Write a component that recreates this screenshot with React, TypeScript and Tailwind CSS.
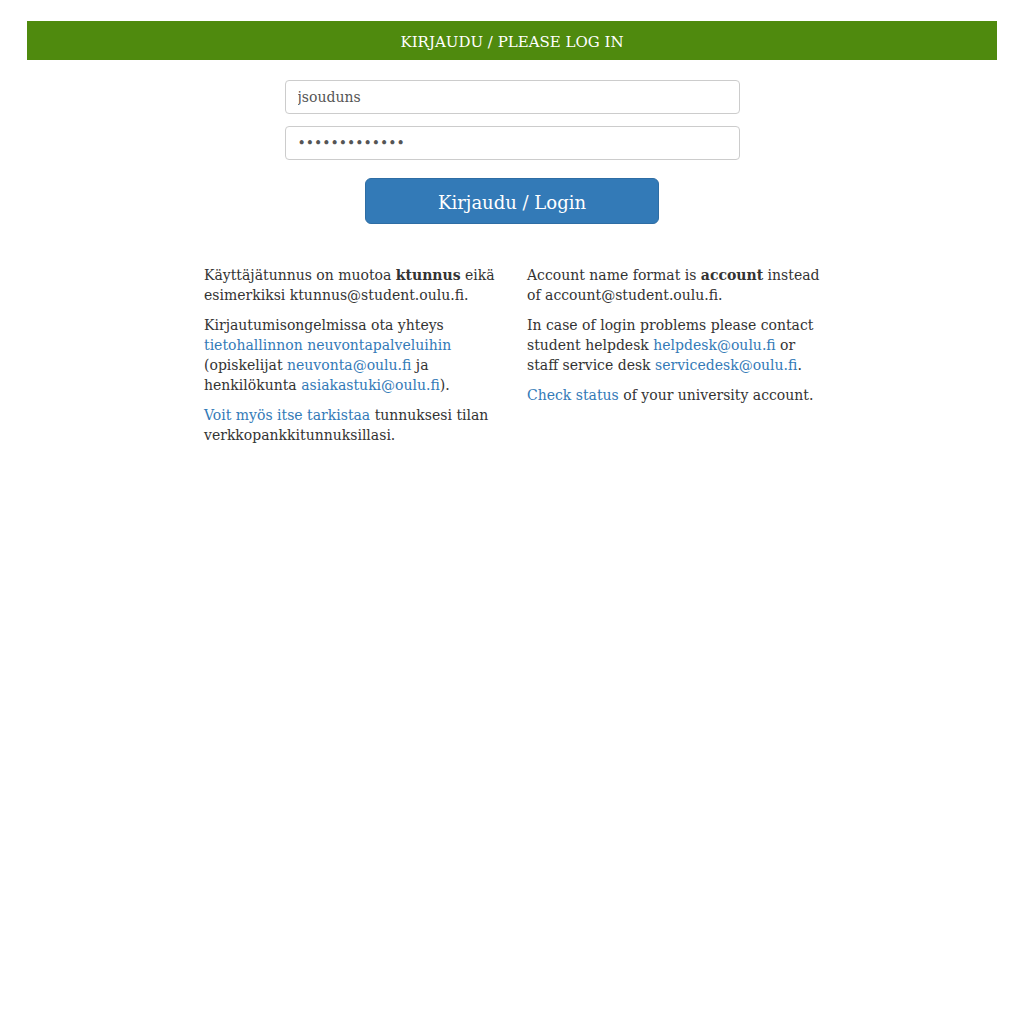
import React from "react";

export default function App() {
  const link = "text-[#337ab7]";
  return (
    <div className="min-h-screen bg-white text-[#333] text-[14px] leading-[20px]" style={{ fontFamily: '"DejaVu Serif", serif' }}>
      <div className="px-[27px] pt-[21px]">
        <div className="h-[39px] bg-[#4f8a0e] flex items-center justify-center text-white text-[15px] pt-[3px]">
          KIRJAUDU / PLEASE LOG IN
        </div>
      </div>
      <div className="flex flex-col items-center mt-[20px]">
        <input
          readOnly
          value="jsouduns"
          className="w-[455px] h-[34px] border border-[#ccc] rounded-[4px] px-[12px] text-[14px] text-[#555] outline-none"
          style={{ fontFamily: '"DejaVu Serif", serif' }}
        />
        <input
          readOnly
          type="password"
          value="abcdefghijklm"
          className="w-[455px] h-[34px] border border-[#ccc] rounded-[4px] px-[12px] text-[14px] text-[#555] outline-none mt-[12px]"
          style={{ fontFamily: '"DejaVu Serif", serif' }}
        />
        <button className="mt-[18px] w-[294px] h-[46px] bg-[#337ab7] border border-[#2e6da4] rounded-[6px] text-white text-[18px] pt-[4px]">
          Kirjaudu / Login
        </button>
      </div>
      <div className="w-[646px] mx-auto mt-[41px] flex">
        <div className="w-1/2 px-[15px]">
          <p className="mb-[10px]">
            Käyttäjätunnus on muotoa <b>ktunnus</b> eikä esimerkiksi ktunnus@student.oulu.fi.
          </p>
          <p className="mb-[10px]">
            Kirjautumisongelmissa ota yhteys <a className={link}>tietohallinnon neuvontapalveluihin</a> (opiskelijat{" "}
            <a className={link}>neuvonta@oulu.fi</a> ja henkilökunta <a className={link}>asiakastuki@oulu.fi</a>).
          </p>
          <p className="mb-[10px]">
            <a className={link}>Voit myös itse tarkistaa</a> tunnuksesi tilan verkkopankkitunnuksillasi.
          </p>
        </div>
        <div className="w-1/2 px-[15px]">
          <p className="mb-[10px]">
            Account name format is <b>account</b> instead of account@student.oulu.fi.
          </p>
          <p className="mb-[10px]">
            In case of login problems please contact student helpdesk <a className={link}>helpdesk@oulu.fi</a> or staff
            service desk <a className={link}>servicedesk@oulu.fi</a>.
          </p>
          <p className="mb-[10px]">
            <a className={link}>Check status</a> of your university account.
          </p>
        </div>
      </div>
    </div>
  );
}
